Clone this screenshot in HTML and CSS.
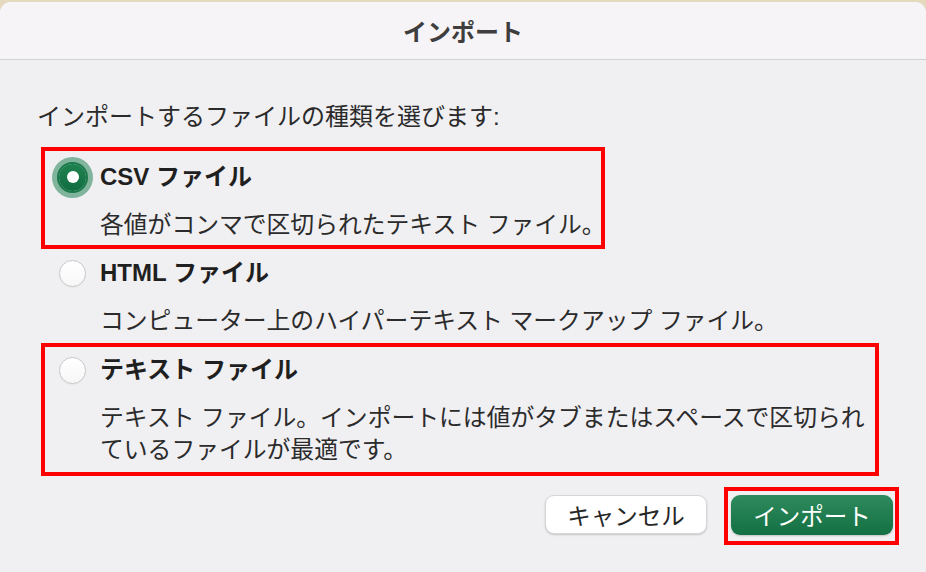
FILE: index.html
```html
<!DOCTYPE html>
<html lang="ja">
<head>
<meta charset="utf-8">
<title>インポート</title>
<link rel="stylesheet" href="styles.css">
</head>
<body>
<div class="window">
  <header class="titlebar">インポート</header>
  <main class="content">
    <p class="prompt">インポートするファイルの種類を選びます:</p>
    <div class="options">
      <div class="option option--csv marked">
        <div class="option-head">
          <span class="radio radio--on"></span>
          <span class="option-title">CSV ファイル</span>
        </div>
        <p class="option-desc">各値がコンマで区切られたテキスト ファイル。</p>
      </div>
      <div class="option option--html">
        <div class="option-head">
          <span class="radio"></span>
          <span class="option-title">HTML ファイル</span>
        </div>
        <p class="option-desc">コンピューター上のハイパーテキスト マークアップ ファイル。</p>
      </div>
      <div class="option option--text marked">
        <div class="option-head">
          <span class="radio"></span>
          <span class="option-title">テキスト ファイル</span>
        </div>
        <p class="option-desc">テキスト ファイル。インポートには値がタブまたはスペースで区切られているファイルが最適です。</p>
      </div>
    </div>
    <div class="actions">
      <button class="btn btn-cancel" type="button">キャンセル</button>
      <div class="marked action-mark">
        <button class="btn btn-primary" type="button">インポート</button>
      </div>
    </div>
  </main>
</div>
</body>
</html>
```
FILE: styles.css
```css
html, body {
  margin: 0;
  padding: 0;
}

body {
  width: 926px;
  height: 572px;
  overflow: hidden;
  background: #e4d9bc;
  font-family: "Liberation Sans", "Noto Sans CJK JP", sans-serif;
  color: #262626;
}

/* sheet window */
.window {
  margin-top: 2px;
  height: 570px;
  background: #f0eff2;
  border-radius: 11px 11px 0 0;
  overflow: hidden;
}

.titlebar {
  height: 57px;
  display: flex;
  align-items: center;
  justify-content: center;
  background: #f7f4f8;
  border-bottom: 1px solid #d2d1d4;
  font-size: 24px;
  font-weight: bold;
  color: #3e3e3e;
}

.content {
  padding: 41px 0 0 37px;
}

.prompt {
  margin: 0;
  font-size: 24px;
  line-height: 32px;
  color: #2a2a2a;
}

/* choice list */
.options {
  margin-top: 14px;
  margin-left: 4px;
}

.option {
  box-sizing: border-box;
  border: 4px solid transparent;
  padding-left: 14px;
}

.marked {
  border: 4px solid #ff0000;
}

.option--csv {
  width: 564px;
  padding: 10px 0 4px 14px;
}

.option--csv .option-desc {
  white-space: nowrap;
}

.option--html {
  padding: 4px 0 2px 14px;
}

.option--text {
  width: 838px;
  padding: 7px 0 6px 14px;
}

.option-head {
  display: flex;
  align-items: center;
  height: 32px;
}

.option-title {
  margin-left: 14px;
  font-size: 24px;
  font-weight: bold;
  line-height: 32px;
  color: #1f1f1f;
}

.option-desc {
  margin: 16px 0 0 41px;
  font-size: 23.8px;
  line-height: 32px;
  color: #2b2b2b;
}

/* radio buttons */
.radio {
  flex: none;
  box-sizing: border-box;
  width: 27px;
  height: 27px;
  border-radius: 50%;
  border: 1px solid #c9c8cb;
  background: linear-gradient(#ffffff, #f7f7f7);
  box-shadow: 0 0.5px 1px rgba(0, 0, 0, 0.08);
}

.radio--on {
  position: relative;
  border: none;
  background: linear-gradient(#1f8150, #116d40);
  box-shadow: 0 0 0 2px #187849, 0 0 0 7px rgba(38, 132, 86, 0.55);
}

.radio--on::after {
  content: "";
  position: absolute;
  left: 50%;
  top: 50%;
  width: 12px;
  height: 12px;
  margin: -6px 0 0 -6px;
  border-radius: 50%;
  background: #ffffff;
}

/* footer buttons */
.actions {
  display: flex;
  justify-content: flex-end;
  align-items: flex-start;
  margin-top: 11px;
  margin-right: 27px;
}

.btn {
  box-sizing: border-box;
  width: 162px;
  border-radius: 9px;
  font-family: inherit;
  font-size: 23.5px;
  padding: 0;
  cursor: default;
}

.btn-cancel {
  height: 39px;
  margin-top: 8px;
  margin-right: 17px;
  background: #ffffff;
  border: 0.5px solid #d6d5d8;
  box-shadow: 0 1px 2px rgba(0, 0, 0, 0.18);
  color: #262626;
}

.action-mark {
  padding: 4px 2px 6px 3px;
}

.btn-primary {
  display: block;
  height: 40px;
  border: none;
  background: linear-gradient(#2f8b5d, #137043);
  box-shadow: 0 1px 2px rgba(0, 0, 0, 0.2);
  color: #ffffff;
}
```
